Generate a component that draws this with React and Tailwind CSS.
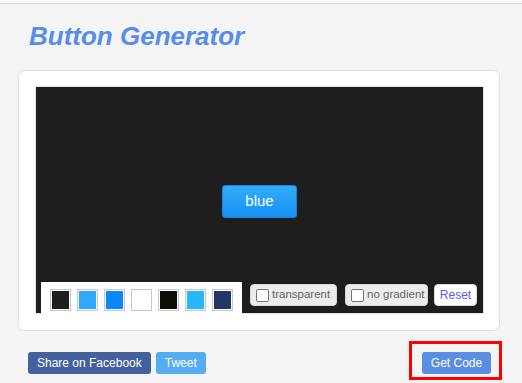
import React, { useState } from 'react';

// preset colours for the swatch strip
const swatches = ['#1e1e20', '#2ea8f8', '#0a88f8', '#ffffff', '#0c0e08', '#27b8fc', '#253566'];

function CheckOption({ label, width }) {
    const [checked, setChecked] = useState(false);
    return (
        <label className={`flex items-center h-[22px] ${width} pl-[5px] bg-[#ececec] border border-[#d8d8d8] rounded-[4px] text-[11.5px] text-[#666] cursor-pointer`}>
            <input type="checkbox" className="hidden" checked={checked} onChange={() => setChecked(!checked)} />
            <span className="w-[13px] h-[13px] bg-white border border-[#767676] rounded-[2px] mr-[3px]"></span>
            {label}
        </label>
    );
}

function App() {
    return (
        <div className="min-h-screen bg-[#f4f4f4] font-['Liberation_Sans',Arial,sans-serif]">
            <div className="h-[4px] bg-[#fafafa] border-b border-[#dcdcdc]"></div>

            <h1 className="mt-[17px] ml-[29px] text-[26px] leading-[30px] font-bold italic text-[#5a8de8]">
                Button Generator
            </h1>

            <div className="mt-[19px] mx-[18px] w-[482px] h-[261px] bg-white border border-[#e0e0e0] rounded-[7px] pt-[15px] pl-[16px]">
                <div className="relative w-[449px] h-[228px] bg-[#1e1e20] border border-[#e2e2e2] flex items-center justify-center">
                    <button className="mt-[3px] w-[75px] h-[33px] rounded-[3px] bg-gradient-to-b from-[#33adf9] to-[#1690f5] border border-[#1a80d8] text-white text-[15px]">
                        blue
                    </button>

                    <div className="absolute left-[5px] bottom-[-1px] flex items-start">
                        <div className="flex gap-[6px] w-[201px] h-[32px] bg-white pt-[7px] pl-[9px]">
                            {swatches.map((c) => (
                                <div key={c} className="w-[21px] h-[22px] border border-[#c4c7d0] p-[1px] bg-white">
                                    <div className="w-full h-full" style={{ background: c }}></div>
                                </div>
                            ))}
                        </div>
                        <div className="flex items-center mt-[2px] ml-[8px]">
                            <CheckOption label="transparent" width="w-[87px]" />
                            <div className="ml-[8px]">
                                <CheckOption label="no gradient" width="w-[83px]" />
                            </div>
                            <button className="ml-[6px] -mt-[1px] w-[43px] h-[22px] bg-white border border-[#d8d8d8] rounded-[4px] text-[12px] text-[#5b5fe8]">
                                Reset
                            </button>
                        </div>
                    </div>
                </div>
            </div>

            <div className="mt-[10px] pl-[28px] pr-[20px] flex items-start justify-between">
                <div className="flex gap-[5px] mt-[11px]">
                    <button className="h-[22px] px-[9px] bg-[#45619d] rounded-[3px] text-white text-[12px]">
                        Share on Facebook
                    </button>
                    <button className="h-[22px] w-[50px] bg-[#55acee] rounded-[3px] text-white text-[12px]">
                        Tweet
                    </button>
                </div>
                <div className="flex border-[3px] border-[#ff0000] pl-[10px] pr-[8px] pt-[8px] pb-[3px]">
                    <button className="h-[22px] w-[69px] bg-[#5b8de0] rounded-[3px] text-white text-[12px]">
                        Get Code
                    </button>
                </div>
            </div>
        </div>
    );
}

export default App;
